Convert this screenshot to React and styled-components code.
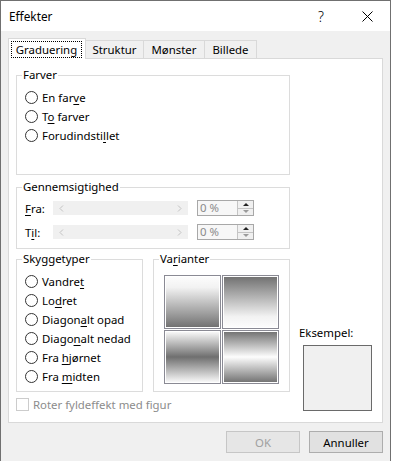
import React from "react";
import styled, { createGlobalStyle } from "styled-components";

const FS = "11.4px";

const GlobalStyle = createGlobalStyle`
  body {
    margin: 0;
    background: #fff;
    font-family: "Noto Sans", "Open Sans", sans-serif;
    font-size: ${FS};
    color: #000;
  }
`;

const Window = styled.div`
  width: 391px;
  height: 461px;
  box-sizing: border-box;
  border: 1px solid #707070;
  border-bottom: none;
  background: #f0f0f0;
  display: flex;
  flex-direction: column;
`;

const TitleBar = styled.div`
  height: 30px;
  background: #fff;
  display: flex;
  align-items: center;
  padding-left: 8px;
`;

const Title = styled.div`
  flex: 1;
  font-size: 11.8px;
`;

const CaptionButton = styled.div`
  width: 46px;
  height: 30px;
  display: flex;
  align-items: center;
  justify-content: center;
  font-size: 14px;
  font-weight: 300;
`;

const TabRow = styled.div`
  display: flex;
  align-items: flex-end;
  height: 20px;
  margin-top: 7px;
  padding-left: 7px;
`;

const Tab = styled.div`
  box-sizing: border-box;
  width: ${(p) => p.w}px;
  height: ${(p) => (p.active ? 21 : 18)}px;
  margin-bottom: ${(p) => (p.active ? -1 : 0)}px;
  margin-left: ${(p) => (p.first ? 0 : -1)}px;
  position: relative;
  z-index: ${(p) => (p.active ? 2 : 1)};
  background: ${(p) => (p.active ? "#fff" : "#f0f0f0")};
  border: 1px solid #d9d9d9;
  border-bottom: none;
  display: flex;
  align-items: ${(p) => (p.active ? "flex-start" : "center")};
  justify-content: center;
  padding-top: ${(p) => (p.active ? 2 : 0)}px;
  line-height: 15px;
`;

const FocusLabel = styled.span`
  box-sizing: border-box;
  width: 71px;
  height: 17px;
  margin-left: -1px;
  border: 1px dotted #000;
  text-align: center;
  line-height: 15px;
`;

const Panel = styled.div`
  margin-left: 7px;
  width: 375px;
  height: 365px;
  box-sizing: border-box;
  background: #fff;
  border: 1px solid #d9d9d9;
  padding: 9px 7px 0 7px;
  display: flex;
  flex-direction: column;
`;

const Group = styled.fieldset`
  box-sizing: border-box;
  margin: ${(p) => p.mt || 0}px 0 0 0;
  padding: 0;
  width: ${(p) => p.w}px;
  height: ${(p) => p.h}px;
  border: 1px solid #dcdcdc;
  min-width: 0;
`;

const Legend = styled.legend`
  margin-left: 5px;
  padding: 0 1px;
  line-height: 14px;
`;

const RadioList = styled.div`
  display: flex;
  flex-direction: column;
  padding: 6px 0 0 8px;
`;

const RadioRow = styled.label`
  display: flex;
  align-items: center;
  gap: 4px;
  height: 19px;
`;

const Circle = styled.span`
  box-sizing: border-box;
  width: 13px;
  height: 13px;
  border-radius: 50%;
  border: 1px solid #333;
  background: #fff;
  flex: none;
`;

const Key = styled.span`
  text-decoration: underline;
  text-underline-offset: 2px;
`;

const SliderGrid = styled.div`
  display: grid;
  grid-template-columns: 20px 135px 58px;
  column-gap: 8px;
  row-gap: 8px;
  align-items: center;
  padding: 6px 0 0 8px;
`;

const ScrollTrack = styled.div`
  height: 14px;
  background: #f0f0f0;
  display: flex;
  align-items: center;
  justify-content: space-between;
  padding: 0 6px;
`;

const Spin = styled.div`
  box-sizing: border-box;
  height: 16px;
  margin-left: 1px;
  border: 1px solid #a8a8a8;
  background: #f7f7f7;
  display: flex;
  align-items: stretch;
`;

const SpinText = styled.span`
  flex: 1;
  color: #8a8a8a;
  line-height: 14px;
  padding-left: 2px;
`;

const SpinButtons = styled.div`
  width: 15px;
  display: flex;
  flex-direction: column;
  border-left: 1px solid #c4c4c4;
`;

const SpinButton = styled.div`
  flex: 1;
  display: flex;
  align-items: center;
  justify-content: center;
  background: #f0f0f0;
  border-bottom: ${(p) => (p.top ? "1px solid #c4c4c4" : "none")};
`;

const Arrow = styled.span`
  width: 0;
  height: 0;
  border-left: 3px solid transparent;
  border-right: 3px solid transparent;
  ${(p) =>
    p.up
      ? `border-bottom: 3px solid ${p.color};`
      : `border-top: 3px solid ${p.color};`}
`;

const Bottom = styled.div`
  display: grid;
  grid-template-columns: 127px 137px 1fr;
  grid-template-rows: auto auto;
  column-gap: 10px;
  margin-top: 3px;
`;

const SwatchGrid = styled.div`
  display: grid;
  grid-template-columns: 57px 57px;
  grid-auto-rows: 54px;
  gap: 1px;
  justify-content: center;
  margin-top: 9px;
`;

const gradients = {
  down: "linear-gradient(#fdfdfd 0%, #f2f2f2 22%, #6f6f6f 100%)",
  up: "linear-gradient(#6f6f6f 0%, #f2f2f2 78%, #fdfdfd 100%)",
  mid: "linear-gradient(#fdfdfd 0%, #6f6f6f 50%, #fdfdfd 100%)",
  edge: "linear-gradient(#6f6f6f 0%, #fdfdfd 50%, #6f6f6f 100%)",
};

const Swatch = styled.div`
  box-sizing: border-box;
  border: 1px solid #8a8a94;
  box-shadow: inset 0 0 0 1px #fff;
  background: ${(p) => gradients[p.kind]};
`;

const Sample = styled.div`
  grid-column: 3;
  grid-row: 1 / span 2;
  align-self: end;
  margin-left: -1px;
  display: flex;
  flex-direction: column;
`;

const SampleLabel = styled.span`
  line-height: 15px;
  margin-bottom: 5px;
`;

const SampleBox = styled.div`
  box-sizing: border-box;
  width: 69px;
  height: 66px;
  margin-left: 4px;
  border: 1px solid #6a6a6a;
  background: #f0f0f0;
`;

const CheckRow = styled.div`
  grid-column: 1 / span 2;
  display: flex;
  align-items: center;
  gap: 4px;
  margin-top: 6px;
  height: 13px;
  color: #8c8c8c;
`;

const CheckBox = styled.span`
  box-sizing: border-box;
  width: 13px;
  height: 13px;
  border: 1px solid #cccccc;
  background: #fff;
`;

const Footer = styled.div`
  display: flex;
  justify-content: flex-end;
  gap: 9px;
  padding: 8px 7px 0 0;
`;

const Button = styled.div`
  box-sizing: border-box;
  width: 74px;
  height: 22px;
  display: flex;
  align-items: center;
  justify-content: center;
  background: ${(p) => (p.disabled ? "#e6e6e6" : "#e1e1e1")};
  border: 1px solid ${(p) => (p.disabled ? "#c6c6c6" : "#adadad")};
  color: ${(p) => (p.disabled ? "#a0a0a0" : "#000")};
`;

function Chevron({ dir }) {
  const d = dir === "left" ? "M4 0.5 L1 3.5 L4 6.5" : "M1 0.5 L4 3.5 L1 6.5";
  return (
    <svg width="5" height="7" viewBox="0 0 5 7">
      <path d={d} fill="none" stroke="#c2c2c2" strokeWidth="1" />
    </svg>
  );
}

function Radio({ children }) {
  return (
    <RadioRow>
      <Circle />
      <span>{children}</span>
    </RadioRow>
  );
}

function SliderRow({ label }) {
  return (
    <>
      <span>{label}</span>
      <ScrollTrack>
        <Chevron dir="left" />
        <Chevron dir="right" />
      </ScrollTrack>
      <Spin>
        <SpinText>0 %</SpinText>
        <SpinButtons>
          <SpinButton top>
            <Arrow up color="#222" />
          </SpinButton>
          <SpinButton>
            <Arrow color="#9a9a9a" />
          </SpinButton>
        </SpinButtons>
      </Spin>
    </>
  );
}

export default function App() {
  return (
    <>
      <GlobalStyle />
      <Window>
        <TitleBar>
          <Title>Effekter</Title>
          <CaptionButton>?</CaptionButton>
          <CaptionButton>
            <svg width="11" height="11" viewBox="0 0 11 11">
              <path d="M0.5 0.5 L10.5 10.5 M10.5 0.5 L0.5 10.5" stroke="#000" strokeWidth="1" />
            </svg>
          </CaptionButton>
        </TitleBar>

        <TabRow>
          <Tab first active w={78}>
            <FocusLabel>Graduering</FocusLabel>
          </Tab>
          <Tab w={59}>Struktur</Tab>
          <Tab w={62}>Mønster</Tab>
          <Tab w={53}>Billede</Tab>
        </TabRow>

        <Panel>
          <Group w={274} h={107}>
            <Legend>Farver</Legend>
            <RadioList>
              <Radio>En far<Key>v</Key>e</Radio>
              <Radio>T<Key>o</Key> farver</Radio>
              <Radio>Forudindsti<Key>l</Key>let</Radio>
            </RadioList>
          </Group>

          <Group w={274} h={69} mt={5}>
            <Legend>Gennemsigtighed</Legend>
            <SliderGrid>
              <SliderRow label={<><Key>F</Key>ra:</>} />
              <SliderRow label={<>T<Key>i</Key>l:</>} />
            </SliderGrid>
          </Group>

          <Bottom>
            <Group w={127} h={140}>
              <Legend>Skyggetyper</Legend>
              <RadioList>
                <Radio>Vandre<Key>t</Key></Radio>
                <Radio>Lo<Key>d</Key>ret</Radio>
                <Radio>Diagon<Key>a</Key>lt opad</Radio>
                <Radio>Diago<Key>n</Key>alt nedad</Radio>
                <Radio>Fra <Key>h</Key>jørnet</Radio>
                <Radio>Fra <Key>m</Key>idten</Radio>
              </RadioList>
            </Group>

            <Group w={137} h={140}>
              <Legend>Va<Key>r</Key>ianter</Legend>
              <SwatchGrid>
                <Swatch kind="down" />
                <Swatch kind="up" />
                <Swatch kind="mid" />
                <Swatch kind="edge" />
              </SwatchGrid>
            </Group>

            <Sample>
              <SampleLabel>Eksempel:</SampleLabel>
              <SampleBox />
            </Sample>

            <CheckRow>
              <CheckBox />
              <span>Roter fyldeffekt med figur</span>
            </CheckRow>
          </Bottom>
        </Panel>

        <Footer>
          <Button disabled>OK</Button>
          <Button>Annuller</Button>
        </Footer>
      </Window>
    </>
  );
}
